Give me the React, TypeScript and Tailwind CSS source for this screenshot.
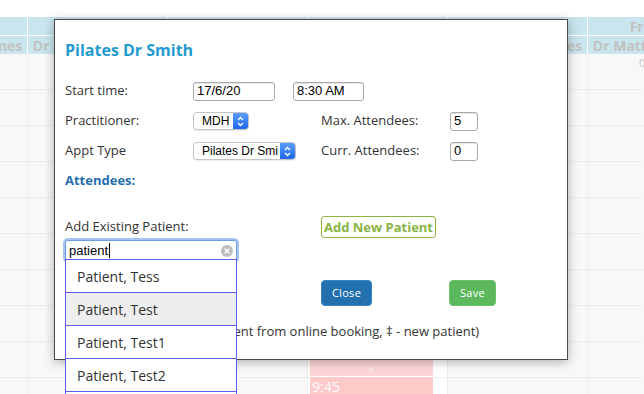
import { useState } from 'react'

const FONT = { fontFamily: '"Open Sans", "Liberation Sans", sans-serif' }
const INPUT_FONT = { fontFamily: '"Liberation Sans", Arial, sans-serif' }

const ROWS = Array.from({ length: 10 }, (_, i) => i)
const PATIENTS = ['Patient, Tess', 'Patient, Test', 'Patient, Test1', 'Patient, Test2', 'Patient, Test3']

function Cell({ index }: { index: number }) {
  const solid = index % 4 === 1
  return (
    <div
      className={`h-[36px] border-b ${solid ? 'border-solid border-[#ececec]' : 'border-dotted border-[#e3e3e3]'}`}
    />
  )
}

function DayColumn({ white, first, children }: { white?: boolean; first?: boolean; children?: React.ReactNode }) {
  return (
    <div
      className={`relative flex flex-col shrink-0 w-[140px] border-r border-[#ededed] ${white ? 'bg-white' : 'bg-[#f8f8f8]'} ${first ? 'ml-[-112px]' : ''}`}
    >
      {ROWS.map((i) => (
        <Cell key={i} index={i} />
      ))}
      {children}
    </div>
  )
}

function HeaderCell({ text, first }: { text?: string; first?: boolean }) {
  return (
    <div
      className={`flex shrink-0 w-[140px] items-center justify-center overflow-hidden whitespace-nowrap border-r border-white text-[14px] font-bold text-[#c2c2c2] ${first ? 'ml-[-112px]' : ''}`}
    >
      {text}
    </div>
  )
}

function MacSelect({ value, width }: { value: string; width: string }) {
  return (
    <div
      className={`flex h-[18px] ${width} items-stretch rounded-[4px] border border-[#c4c4c4] bg-white shadow-[0_1px_1px_rgba(0,0,0,0.08)] overflow-hidden`}
      style={INPUT_FONT}
    >
      <span className="flex-1 whitespace-nowrap overflow-hidden pl-[8px] text-[12px] leading-[16px] text-black">{value}</span>
      <span className="flex w-[15px] shrink-0 items-center justify-center bg-gradient-to-b from-[#5a9cfb] to-[#1d66ee]">
        <svg width="7" height="11" viewBox="0 0 7 11" fill="none" stroke="white" strokeWidth="1.3">
          <path d="M1 4 L3.5 1.5 L6 4" />
          <path d="M1 7 L3.5 9.5 L6 7" />
        </svg>
      </span>
    </div>
  )
}

function TextBox({ value, width }: { value: string; width: string }) {
  return (
    <div
      className={`flex h-[19px] ${width} items-center rounded-[3px] border border-[#a9a9a9] bg-white pl-[3px] text-[13px] text-black shadow-[inset_0_1px_1px_rgba(0,0,0,0.1)]`}
      style={INPUT_FONT}
    >
      {value}
    </div>
  )
}

export default function App() {
  const [hovered] = useState(1)

  return (
    <div className="relative w-[644px] h-[394px] overflow-hidden bg-white" style={FONT}>
      <div className="pt-[17px]">
        <div className="flex h-[18px] bg-[#c9e5ee]">
          <HeaderCell first />
          <HeaderCell />
          <HeaderCell />
          <HeaderCell />
          <HeaderCell text="Thu, 18/6" />
          <HeaderCell text="Fri, 19/6" />
        </div>
        <div className="flex h-[19px] border-t border-white bg-[#c9e5ee]">
          <HeaderCell text="Dr Matthew James" first />
          <HeaderCell text="Dr Matthew James" />
          <HeaderCell text="Dr Matthew James" />
          <HeaderCell text="Dr Matthew James" />
          <HeaderCell text="Dr Matthew James" />
          <HeaderCell text="Dr Matthew James" />
        </div>
        <div className="flex">
          <DayColumn first />
          <DayColumn />
          <DayColumn />
          <DayColumn white>
            <div className="absolute left-[2px] top-[250px] flex w-[123px] flex-col">
              <div className="flex h-[72px] items-end justify-center bg-[#fdd7d7] pb-[1px] text-[11px] leading-[12px] text-white">
                =
              </div>
              <div className="mt-[1px] h-[40px] bg-[#fdc9c9] pl-[2px] text-[14px] leading-[20px] text-white">
                9:45
              </div>
            </div>
          </DayColumn>
          <DayColumn />
          <DayColumn>
            <span className="absolute left-[51px] top-[1px] text-[11px] text-[#c4c4c4]">09:00</span>
          </DayColumn>
        </div>
      </div>

      <div className="absolute left-[54px] top-[19px] h-[341px] w-[514px] border border-[#4a4a4a] bg-white pl-[10px] pt-[19px] shadow-[0_2px_10px_rgba(0,0,0,0.3)]">
        <h2 className="text-[16px] font-bold leading-[22px] text-[#1f9bd0]">Pilates Dr Smith</h2>

        <div className="mt-[20px] flex flex-col gap-[10px] text-[13px] text-[#333]">
          <div className="grid h-[20px] grid-cols-[128px_128px_129px_1fr] items-center">
            <span>Start time:</span>
            <div className="col-span-3 flex items-center gap-[18px]">
              <TextBox value="17/6/20" width="w-[82px]" />
              <TextBox value="8:30 AM" width="w-[71px]" />
            </div>
          </div>
          <div className="grid h-[20px] grid-cols-[128px_128px_129px_1fr] items-center">
            <span>Practitioner:</span>
            <MacSelect value="MDH" width="w-[56px]" />
            <span>Max. Attendees:</span>
            <TextBox value="5" width="w-[28px]" />
          </div>
          <div className="grid h-[20px] grid-cols-[128px_128px_129px_1fr] items-center">
            <span>Appt Type</span>
            <MacSelect value="Pilates Dr Smi" width="w-[103px]" />
            <span>Curr. Attendees:</span>
            <TextBox value="0" width="w-[28px]" />
          </div>
          <div className="flex h-[20px] items-center font-bold text-[#2470ae]">Attendees:</div>
        </div>

        <div className="mt-[25px] grid grid-cols-[256px_1fr] text-[13px] text-[#333]">
          <div className="flex h-[22px] items-center">Add Existing Patient:</div>
          <div>
            <button className="h-[22px] w-[115px] rounded-[3px] border border-[#8db53f] bg-white text-[13px] font-bold leading-[18px] text-[#8ab443]">
              Add New Patient
            </button>
          </div>
        </div>

        <div className="mt-[2px] flex h-[21px] w-[172px] items-center rounded-[3px] border border-[#6f9fe3] bg-white pl-[3px] pr-[3px] shadow-[0_0_0_2px_rgba(90,150,235,0.55)]">
          <span className="text-[13px] leading-[16px] text-black" style={INPUT_FONT}>patient</span>
          <span className="ml-[1px] h-[15px] w-[1px] bg-black" />
          <svg className="ml-auto" width="12" height="12" viewBox="0 0 12 12">
            <circle cx="6" cy="6" r="6" fill="#bdbdbd" />
            <path d="M3.8 3.8 L8.2 8.2 M8.2 3.8 L3.8 8.2" stroke="white" strokeWidth="1.6" />
          </svg>
        </div>

        <div className="mt-[19px] grid grid-cols-[256px_128px_1fr]">
          <span />
          <button className="h-[26px] w-[51px] rounded-[4px] border border-[#3584c4] bg-[#2370ae] text-[11px] tracking-[0.3px] text-white">
            Close
          </button>
          <button className="h-[26px] w-[47px] rounded-[4px] border border-[#6cc36c] bg-[#5cb85c] text-[11px] tracking-[0.3px] text-white">
            Save
          </button>
        </div>

        <p className="mt-[16px] text-[13px] leading-[18px] text-[#333]">
          (* - existing patients, † - patient from online booking, ‡ - new patient)
        </p>

        <ul className="absolute left-[10px] top-[239px] w-[172px] border-t border-x border-[#5c5cf2] bg-white">
          {PATIENTS.map((name, i) => (
            <li
              key={name}
              className={`flex h-[33px] items-center border-b border-[#5c5cf2] pl-[11px] text-[14px] text-[#333] ${i === hovered ? 'bg-[#eeeeee]' : 'bg-white'}`}
            >
              {name}
            </li>
          ))}
        </ul>
      </div>
    </div>
  )
}
